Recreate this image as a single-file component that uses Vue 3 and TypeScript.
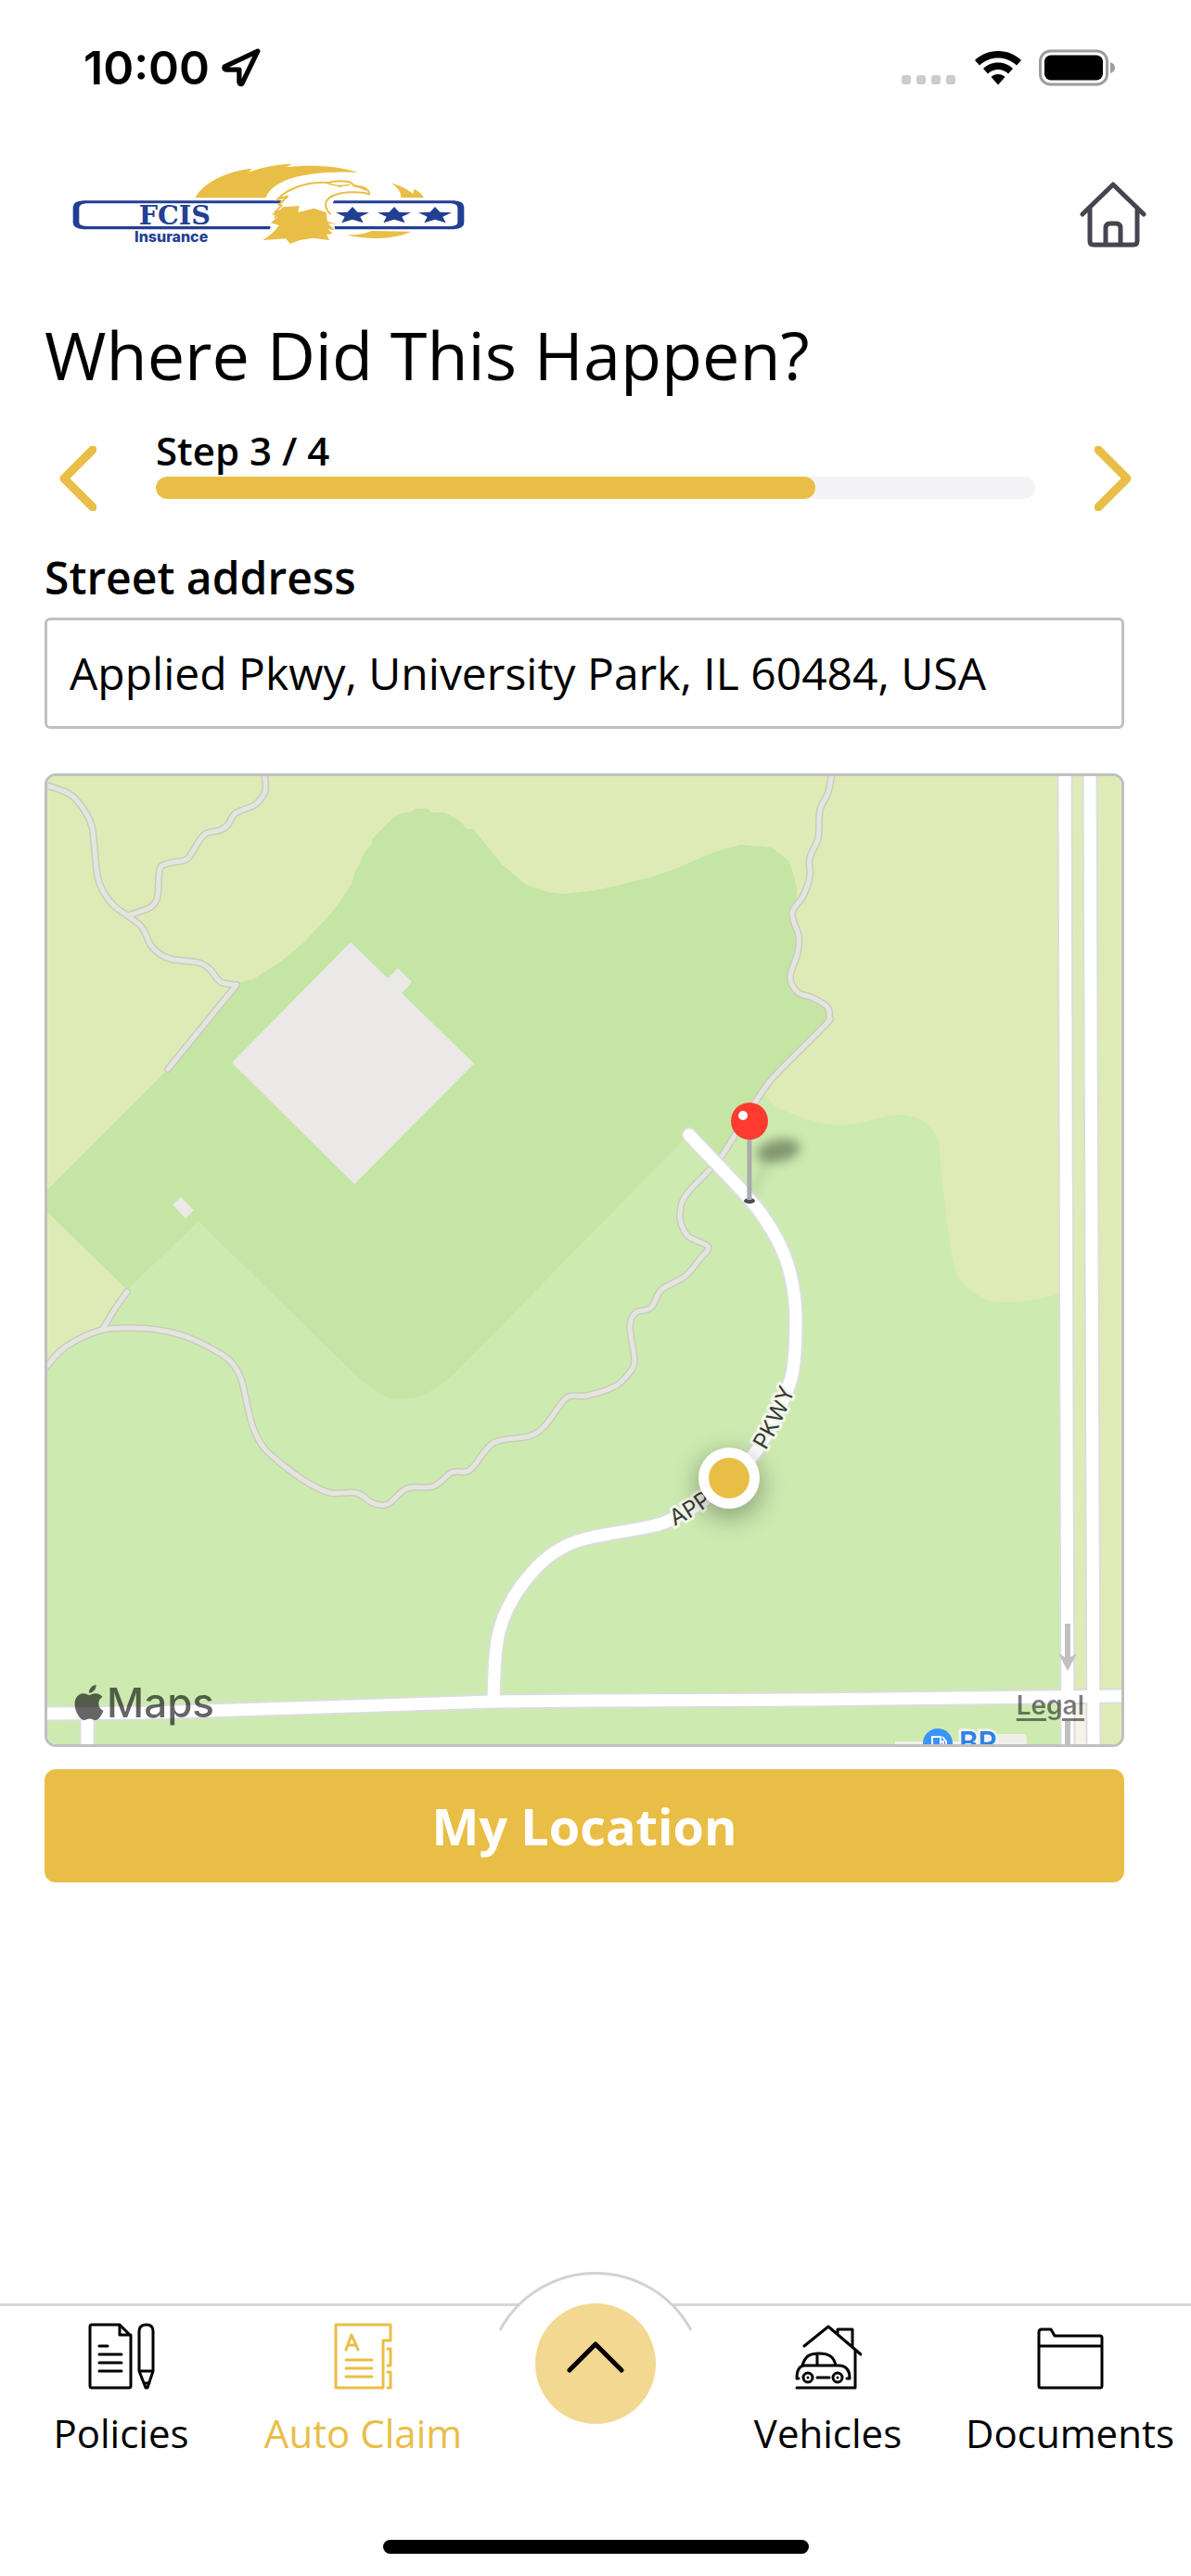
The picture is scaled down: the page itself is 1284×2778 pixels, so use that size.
<script setup lang="ts">
import { ref } from 'vue'

type Point = [number, number]

/** Smooth curve running through every given point. */
function curve(points: Point[]): string {
  let d = `M${points[0][0]} ${points[0][1]}`
  for (let i = 0; i < points.length - 1; i++) {
    const a = points[i - 1] ?? points[i]
    const b = points[i]
    const c = points[i + 1]
    const e = points[i + 2] ?? c
    const c1 = [b[0] + (c[0] - a[0]) / 6, b[1] + (c[1] - a[1]) / 6]
    const c2 = [c[0] - (e[0] - b[0]) / 6, c[1] - (e[1] - b[1]) / 6]
    d += ` C${c1.join(' ')} ${c2.join(' ')} ${c[0]} ${c[1]}`
  }
  return d
}

const trails: string[] = [
  curve([[-6, 8], [0, 10], [25, 20], [40, 37], [48, 54], [51, 79], [54, 108], [60, 124], [72, 140], [86, 150], [102, 163], [112, 183], [125, 194], [137, 198], [163, 201], [175, 208], [187, 222], [204, 225]]) + ' L130 316',
  curve([[234, -4], [235, 15], [229, 26], [222, 32], [203, 40], [195, 52], [187, 58], [171, 62], [163, 71], [153, 87], [147, 91], [127, 95], [121, 102], [119, 129], [115, 138], [108, 143], [88, 150]]),
  curve([[846, -4], [842, 17], [833, 37], [831, 67], [822, 88], [822, 108], [815, 129], [803, 148], [810, 172], [809, 190], [801, 217], [809, 233], [825, 239], [841, 249], [843, 261], [839, 268], [788, 319], [776, 333], [757, 361], [739, 391], [723, 415], [689, 451], [682, 472], [685, 487], [692, 497], [711, 506], [712, 511], [704, 520], [688, 539], [662, 554], [651, 573], [634, 579], [628, 594], [633, 630], [627, 644], [612, 658], [582, 668], [562, 669], [551, 681], [535, 702], [519, 712], [481, 719], [456, 748], [436, 751], [416, 766], [388, 768], [369, 784], [359, 786], [349, 783], [333, 773], [305, 773], [281, 762], [258, 746], [234, 725], [222, 703], [216, 680], [209, 650], [200, 634], [187, 623], [151, 605], [119, 597], [88, 595], [60, 597], [32, 608], [13, 621], [0, 636], [-4, 641]]),
  curve([[86, 556], [72, 576], [60, 596]]),
]

const parkway = curve([[692, 387], [757, 456], [782, 491], [797, 523], [805, 558], [807, 594], [804, 640], [796, 666], [779, 703], [762, 731], [736, 758], [703, 784], [672, 802], [646, 810], [586, 821], [559, 830], [534, 847], [511, 873], [496, 898], [487, 923], [483, 950], [481, 994]])

const parkwayLabel = curve([[646, 810], [672, 802], [703, 784], [736, 758], [762, 731], [779, 703], [796, 666], [804, 640]])

const roads: string[] = [
  parkway,
  'M1097 -10 L1100 1054',
  'M1124 -10 L1128 1054',
  'M43 1010 V1054',
  'M-10 1011 L107 1010 L266 1005 L481 998 L589 997 L819 996 L1168 992',
]

const address = ref('Applied Pkwy, University Park, IL 60484, USA')
const step = ref(3)
const stepCount = 4

function previousStep() {
  step.value = Math.max(1, step.value - 1)
}
function nextStep() {
  step.value = Math.min(stepCount, step.value + 1)
}
</script>

<template>
  <div class="screen">
    <div class="status">
      <div class="status-left">
        <span class="time">10:00</span>
        <svg class="locate" viewBox="0 0 40 40" aria-hidden="true">
          <path d="M37 3 L3 19 Q2 22 5 22 H18 V35 Q19 38 21 36 Z" />
        </svg>
      </div>
      <div class="status-right">
        <svg width="60" height="38" viewBox="0 0 60 38" aria-hidden="true">
          <g fill="#cccccc">
            <rect x="0" y="27" width="10" height="10" rx="3" />
            <rect x="16" y="27" width="10" height="10" rx="3" />
            <rect x="32" y="27" width="10" height="10" rx="3" />
            <rect x="48" y="27" width="10" height="10" rx="3" />
          </g>
        </svg>
        <svg width="52" height="38" viewBox="0 0 52 38" aria-hidden="true">
          <path d="M26 1 C36 1 45 5 51 11 L46 16.500 C40 11 33 8.500 26 8.500 C19 8.500 12 11 6 16.500 L1 11 C7 5 16 1 26 1 Z" />
          <path d="M26 13.500 C32.500 13.500 38 16 42 20 L37 25.500 C34 22.500 30 21 26 21 C22 21 18 22.500 15 25.500 L10 20 C14 16 19.500 13.500 26 13.500 Z" />
          <path d="M26 26 C29 26 31.500 27 33.500 29 L26 37.500 L18.500 29 C20.500 27 23 26 26 26 Z" />
        </svg>
        <svg width="82" height="40" viewBox="0 0 82 40" aria-hidden="true">
          <rect x="1.500" y="2" width="72" height="36" rx="11" fill="none" stroke="#9c9c9c" stroke-width="3" />
          <rect x="6" y="6.500" width="63" height="27" rx="7" />
          <path d="M77 14 Q82 16 82 20 Q82 24 77 26 Z" fill="#9c9c9c" />
        </svg>
      </div>
    </div>

    <header class="header">
      <svg class="logo" viewBox="0 33 1380 360" role="img" aria-label="FCIS Insurance">
        <path fill="#233f93" fill-rule="evenodd" d="M90 169 H1288 Q1321 171 1321 190 V240 Q1321 260 1288 262 H90 Q56 260 56 240 V190 Q56 171 90 169 Z M100 178 Q76 180 76 192 V240 Q76 250 100 252 H1278 Q1300 250 1300 240 V192 Q1300 180 1278 178 Z" />
        <path fill="#ffffff" d="M735 160 H905 L890 190 L905 270 H690 L712 200 Z" />
        <g fill="#e9be46">
          <path d="M452 160 C475 112 550 75 634 65 L625 77 C670 60 720 51 766 50 L746 61 C830 51 910 57 978 78 C900 73 800 80 742 104 C700 123 684 143 680 160 Z" />
          <path d="M1085 112 C1115 121 1140 134 1155 147 L1160 131 Q1184 144 1191 160 H1117 Q1118 134 1085 112 Z" />
          <path d="M942 278 Q972 282 998 275 L1022 267 L1150 269 Q1100 292 1030 291 Q966 289 942 278 Z" />
        </g>
        <path fill="#ffffff" stroke="#e9be46" stroke-width="6" d="M708 226 L732 200 L708 208 L730 185 L722 182 L752 154 L718 165 C752 127 818 107 880 111 C905 104 940 107 952 109 L968 121 C1000 124 1014 135 1014 148 C990 139 930 139 905 150 C868 163 864 186 889 214" />
        <path fill="none" stroke="#e9be46" stroke-width="5" d="M876 112 C895 120 925 123 952 117 M908 120 L925 124 M962 122 C980 124 995 130 1004 136" />
        <path fill="#e9be46" d="M735 190 L788 186 L784 207 L835 194 L875 207 L879 236 L910 245 L880 243 L904 265 L880 261 L896 275 L876 279 L886 297 L832 290 L790 297 L758 309 L745 292 L668 297 Q702 279 722 249 L696 241 L719 221 L699 213 L722 203 Z" />
        <g fill="#233f93">
          <path id="star" d="M960 189 L976 206 L1014 208 L985 221 L995 241 L960 230 L925 241 L935 221 L906 208 L944 206 Z" />
          <use href="#star" x="135" />
          <use href="#star" x="267" />
          <text class="logo-name" x="385" y="246" text-anchor="middle">FCIS</text>
          <text class="logo-sub" x="374" y="304" text-anchor="middle">Insurance</text>
        </g>
      </svg>
      <button class="icon-button home" type="button" aria-label="Home">
        <svg width="72" height="72" viewBox="0 0 72 72" fill="none" stroke="#43464f" stroke-width="5" stroke-linecap="round" stroke-linejoin="round">
          <path d="M3 36 L36 4 L69 36 M11 30 V65 Q11 69 15 69 H58 Q62 69 62 65 V30" />
          <path d="M28 68 V51 Q28 46 33 46 H39 Q44 46 44 51 V68" />
        </svg>
      </button>
    </header>

    <main class="main">
      <h1>Where Did This Happen?</h1>

      <div class="stepper">
        <button class="icon-button arrow" type="button" aria-label="Previous step" @click="previousStep">
          <svg width="40" height="70" viewBox="0 0 40 70"><path d="M36 4 L5 35 L36 66" /></svg>
        </button>
        <div class="step">
          <div id="step-label" class="step-label">Step {{ step }} / {{ stepCount }}</div>
          <div class="track" role="progressbar" aria-labelledby="step-label" :aria-valuenow="step" aria-valuemin="0" :aria-valuemax="stepCount">
            <div class="fill" :style="{ width: (step / stepCount) * 100 + '%' }"></div>
          </div>
        </div>
        <button class="icon-button arrow" type="button" aria-label="Next step" @click="nextStep">
          <svg width="40" height="70" viewBox="0 0 40 70"><path d="M4 4 L35 35 L4 66" /></svg>
        </button>
      </div>

      <form class="form" @submit.prevent>
        <label for="address">Street address</label>
        <input id="address" v-model="address" type="text" autocomplete="off" />

        <div class="map">
          <svg class="map-canvas" viewBox="0 0 1158 1044" role="img" aria-label="Map of Applied Pkwy">
            <defs>
              <filter id="soft" x="-50%" y="-50%" width="200%" height="200%">
                <feGaussianBlur stdDeviation="6" />
              </filter>
              <filter id="glow" x="-100%" y="-100%" width="300%" height="300%">
                <feGaussianBlur stdDeviation="14" />
              </filter>
              <path id="parkway-label" :d="parkwayLabel" />
            </defs>

            <!-- land -->
            <rect width="1158" height="1044" fill="#cdebb0" />
            <path fill="#dfebb6" d="M0 0 H1158 V1044 H1110 L1096 558 L1088 559 Q1040 572 1012 564 Q985 551 979 533 Q971 500 961 394 Q950 366 920 365 C900 365 880 376 853 376 Q822 374 794 360 L788 359 L773 343 L300 300 L86 554 L60 597 Q25 609 0 637 Z" />
            <path fill="#c4e5a4" d="M0 446 L130 316 L206 223 L222 219 L253 199 L276 180 L306 148 L319 130 L328 116 L332 102 L337 95 L341 83 L350 73 V68 L374 44 L382 40 L392 39 L396 35 H410 L414 39 H428 L444 48 L453 57 H459 L490 95 L516 117 L539 125 L556 127 L584 124 L610 119 L650 109 L677 100 L719 82 L747 74 L781 77 L799 91 L804 104 L808 122 V133 L803 149 L810 172 L801 219 L809 233 L840 247 L843 262 L788 319 L757 360 L721 415 L691 387 L440 643 Q410 671 388 671 H369 Q352 666 313 627 L163 480 L86 554 L0 470 Z" />
            <rect x="1107" y="1000" width="14" height="44" fill="#f5f2e8" />
            <path fill="#f1efe9" d="M914 1041 H984 V1033 H1051 Q1056 1033 1056 1038 V1044 H914 Z" />

            <!-- buildings -->
            <path fill="#ebe9e7" d="M327 179 L367 218 L378 207 L393 222 L382 234 L460 310 L331 440 L199 309 Z M144 454 L158 468 L149 477 L135 462 Z" />

            <!-- trails and roads -->
            <g fill="none" stroke-linecap="round" stroke-linejoin="round">
              <path v-for="(d, i) in trails" :key="'tc' + i" :d="d" stroke="#c9cdbb" stroke-width="8" />
              <path v-for="(d, i) in trails" :key="'t' + i" :d="d" stroke="#e4e5df" stroke-width="5" />
              <path v-for="(d, i) in roads" :key="'rc' + i" :d="d" stroke="#dbdedb" stroke-width="17" />
              <path v-for="(d, i) in roads" :key="'r' + i" :d="d" stroke="#ffffff" stroke-width="13" />
            </g>
            <path fill="#c1c1c1" d="M1097 914 H1103 V950 L1110 946 L1100 965 L1090 946 L1097 950 Z M1097 1019 H1103 V1044 H1097 Z" />

            <text class="road-name" dy="8"><textPath href="#parkway-label" startOffset="28">APPLIED</textPath></text>
            <text class="road-name" dy="8"><textPath href="#parkway-label" startOffset="152">PKWY</textPath></text>

            <!-- fuel station -->
            <circle cx="960" cy="1043" r="16" fill="#3b93f7" />
            <path fill="none" stroke="#ffffff" stroke-width="2" d="M954 1048 V1036 H963 V1048 M963 1041 H966 V1046 M965 1036 L969 1041 V1048" />
            <text class="poi" x="983" y="1053">BP</text>

            <!-- current location -->
            <circle cx="735" cy="765" r="35" fill="#000000" opacity="0.32" filter="url(#glow)" />
            <circle cx="735" cy="757" r="33" fill="#ffffff" />
            <circle cx="735" cy="757" r="22" fill="#e9be46" />

            <!-- dropped pin -->
            <g filter="url(#soft)" opacity="0.36">
              <ellipse cx="788" cy="404" rx="24" ry="12" transform="rotate(-12 788 404)" />
              <path d="M776 412 L760 454" stroke="#000000" stroke-width="4" opacity="0.5" />
            </g>
            <ellipse cx="757" cy="458" rx="6" ry="3" fill="#4c4c4c" />
            <path d="M757 390 V457" stroke="#a9abad" stroke-width="5" />
            <circle cx="757" cy="372" r="20" fill="#ff3b30" />
            <circle cx="750" cy="366" r="5" fill="#ffffff" />
          </svg>

          <div class="brand">
            <svg width="38" height="38" viewBox="0 0 24 24" fill="currentColor" aria-hidden="true">
              <path d="M12.152 6.896c-.948 0-2.415-1.078-3.960-1.040-2.040.027-3.910 1.183-4.961 3.014-2.117 3.675-.546 9.103 1.519 12.090 1.013 1.454 2.208 3.090 3.792 3.039 1.520-.065 2.090-.987 3.935-.987 1.831 0 2.350.987 3.960.948 1.637-.026 2.676-1.480 3.676-2.948 1.156-1.688 1.636-3.325 1.662-3.415-.039-.013-3.182-1.221-3.220-4.857-.026-3.040 2.480-4.494 2.597-4.559-1.429-2.090-3.623-2.324-4.390-2.376-2-.156-3.675 1.090-4.610 1.090zM15.530 3.830c.843-1.012 1.400-2.427 1.245-3.830-1.207.052-2.662.805-3.532 1.818-.780.896-1.454 2.338-1.273 3.714 1.338.104 2.715-.688 3.559-1.701" />
            </svg>
            <span>Maps</span>
          </div>
          <a class="legal" href="#legal">Legal</a>
        </div>

        <button class="primary" type="button">My Location</button>
      </form>
    </main>

    <footer class="dock">
      <nav class="tabs">
        <a class="tab" href="#policies">
          <svg class="tab-icon" viewBox="0 0 72 72">
            <path d="M34 2 H4 Q2 2 2 4 V68 Q2 70 4 70 H44 Q46 70 46 68 V14 Z M34 2 V13 H46" />
            <path d="M12 25 H21 M12 34 H36 M12 43 H36 M12 52 H36" />
            <path d="M55 52 V9 Q55 2 63 2 Q70 2 70 9 V52 L64 70 H62 L55 52 H70 M60 65 H66" />
          </svg>
          <span>Policies</span>
        </a>
        <a class="tab active" href="#auto-claim" aria-current="page">
          <svg class="tab-icon" viewBox="-4 0 72 72">
            <path d="M2 2 H61 V19 H53 V70 H2 Z M58 28 H61 V46 H58 M58 53 H61 V70 H58" />
            <path d="M13 29 L19 13 L26 29 M15 24 H24 M13 40 H41 M13 49 H41 M13 58 H41" />
          </svg>
          <span>Auto Claim</span>
        </a>
        <div class="center">
          <svg class="arc" viewBox="0 0 240 66" aria-hidden="true">
            <path d="M17 63 A117 117 0 0 1 223 63" fill="#ffffff" stroke="#d2d2d2" stroke-width="3" />
          </svg>
          <button class="expand" type="button" aria-label="Show more">
            <svg width="64" height="36" viewBox="0 0 64 36"><path d="M4 32 L32 4 L60 32" /></svg>
          </button>
        </div>
        <a class="tab" href="#vehicles">
          <svg class="tab-icon" viewBox="0 0 72 72">
            <path d="M10 25 L36 4 L71 34 M46 11 V7 H62 V26 M65 30 V70 H2" />
            <path d="M4 60 H2 C2 52 4 46 11 46 H47 C56 46 59 52 59 60 H56 M8 46 C11 35 17 33 26 33 C36 33 42 36 44 46 M24 33 V46 M24 59 H37" />
            <circle cx="14" cy="59" r="5" /><circle cx="46" cy="59" r="5" />
            <path d="M14 59 V59 M46 59 V59" />
          </svg>
          <span>Vehicles</span>
        </a>
        <a class="tab" href="#documents">
          <svg class="tab-icon" viewBox="0 0 72 72">
            <path d="M2 10 Q2 7 5 7 H15 L19 14 H68 Q70 14 70 16 V68 Q70 70 68 70 H4 Q2 70 2 68 Z M2 25 H70" />
          </svg>
          <span>Documents</span>
        </a>
      </nav>
      <div class="home-indicator"></div>
    </footer>
  </div>
</template>

<style>
body {
  margin: 0;
  background: #ffffff;
}
</style>

<style scoped>
.screen {
  display: flex;
  flex-direction: column;
  min-height: 100vh;
  background: #ffffff;
  color: #000000;
  font-family: "Open Sans", "Noto Sans", sans-serif;
  overflow: hidden;
}

button,
input {
  font-family: inherit;
  color: inherit;
}

.status {
  display: flex;
  align-items: center;
  justify-content: space-between;
  height: 145px;
  padding: 0 82px 0 90px;
}

.status-left {
  display: flex;
  align-items: center;
  gap: 13px;
}

.time {
  font: 600 50px/60px Inter, sans-serif;
}

.locate {
  width: 42px;
  height: 42px;
  fill: none;
  stroke: #000000;
  stroke-width: 5;
  stroke-linejoin: round;
}

.status-right {
  display: flex;
  align-items: center;
  gap: 18px;
}

.header {
  display: flex;
  align-items: center;
  justify-content: space-between;
  margin-top: 26px;
  padding: 0 48px 0 60px;
}

.logo {
  width: 460px;
  height: 120px;
}

.logo-name {
  font: 700 86px "DejaVu Serif", serif;
}

.logo-sub {
  font: 800 48px Inter, sans-serif;
}

.icon-button {
  display: flex;
  align-items: center;
  justify-content: center;
  width: 72px;
  padding: 0;
  border: 0;
  background: none;
}

.home {
  height: 72px;
}

.main {
  padding: 0 48px;
}

h1 {
  margin: 43px 0 0;
  font-size: 72px;
  font-weight: 400;
  line-height: 96px;
}

.stepper {
  display: flex;
  gap: 48px;
  margin-top: 27px;
}

.arrow {
  height: 118px;
}

.arrow path {
  fill: none;
  stroke: #e9be46;
  stroke-width: 9;
  stroke-linecap: round;
  stroke-linejoin: round;
}

.step {
  flex: 1;
}

.step-label {
  font-size: 42px;
  font-weight: 600;
  line-height: 57px;
}

.track {
  height: 24px;
  border-radius: 12px;
  background: #f4f4f6;
  overflow: hidden;
}

.fill {
  height: 100%;
  border-radius: 12px;
  background: #e9be46;
}

.form {
  display: flex;
  flex-direction: column;
  margin: 16px 24px 0 0;
}

label {
  font-size: 48px;
  font-weight: 600;
  line-height: 64px;
}

input {
  box-sizing: border-box;
  width: 100%;
  height: 120px;
  margin-top: 11px;
  padding: 0 24px 2px;
  border: 3px solid #c0c0c0;
  border-radius: 6px;
  background: #ffffff;
  font-size: 48px;
}

.map {
  position: relative;
  margin-top: 48px;
  border: 3px solid #c0c0c0;
  border-radius: 12px;
  overflow: hidden;
}

.map-canvas {
  display: block;
  width: 100%;
}

.road-name {
  font: 400 24px Inter, sans-serif;
  fill: #3a3a3a;
  stroke: #f3f8ea;
  stroke-width: 6;
  stroke-linejoin: round;
  paint-order: stroke;
}

.poi {
  font: 600 31px Inter, sans-serif;
  fill: #2a82e8;
  stroke: #f4f4ee;
  stroke-width: 5;
  paint-order: stroke;
}

.brand {
  position: absolute;
  left: 26px;
  bottom: 17px;
  display: flex;
  align-items: center;
  color: #000000;
  opacity: 0.6;
  font: 500 44px/56px Inter, sans-serif;
}

.legal {
  position: absolute;
  right: 40px;
  bottom: 24px;
  color: #000000;
  opacity: 0.5;
  font: 600 28px/36px Inter, sans-serif;
  text-decoration: underline;
  text-decoration-thickness: 3px;
  text-underline-offset: 4px;
}

.primary {
  height: 122px;
  margin-top: 24px;
  border: 0;
  border-radius: 12px;
  background: #e9be46;
  color: #ffffff;
  font-size: 54px;
  font-weight: 700;
}

.dock {
  margin-top: auto;
  padding-bottom: 24px;
  border-top: 3px solid #d7d7d7;
}

.tabs {
  display: flex;
}

.tab {
  display: flex;
  flex: 1;
  flex-direction: column;
  align-items: center;
  gap: 19px;
  padding-top: 18px;
  color: #000000;
  font-size: 42px;
  line-height: 56px;
  text-decoration: none;
}

.tab.active {
  color: #e9be46;
}

.tab-icon {
  width: 72px;
  height: 72px;
  fill: none;
  stroke: currentColor;
  stroke-width: 3;
  stroke-linecap: round;
  stroke-linejoin: round;
}

.center {
  position: relative;
  display: flex;
  align-items: flex-start;
  justify-content: center;
  width: 240px;
}

.arc {
  position: absolute;
  top: -37px;
  left: 0;
  width: 240px;
  height: 66px;
}

.expand {
  position: relative;
  display: flex;
  align-items: center;
  justify-content: center;
  width: 130px;
  height: 130px;
  margin-top: -3px;
  padding: 0 0 14px;
  border: 0;
  border-radius: 50%;
  background: #f2d890;
}

.expand path {
  fill: none;
  stroke: #000000;
  stroke-width: 5;
  stroke-linecap: round;
  stroke-linejoin: round;
}

.home-indicator {
  width: 459px;
  height: 15px;
  margin: 87px auto 0;
  border-radius: 8px;
  background: #000000;
}
</style>
